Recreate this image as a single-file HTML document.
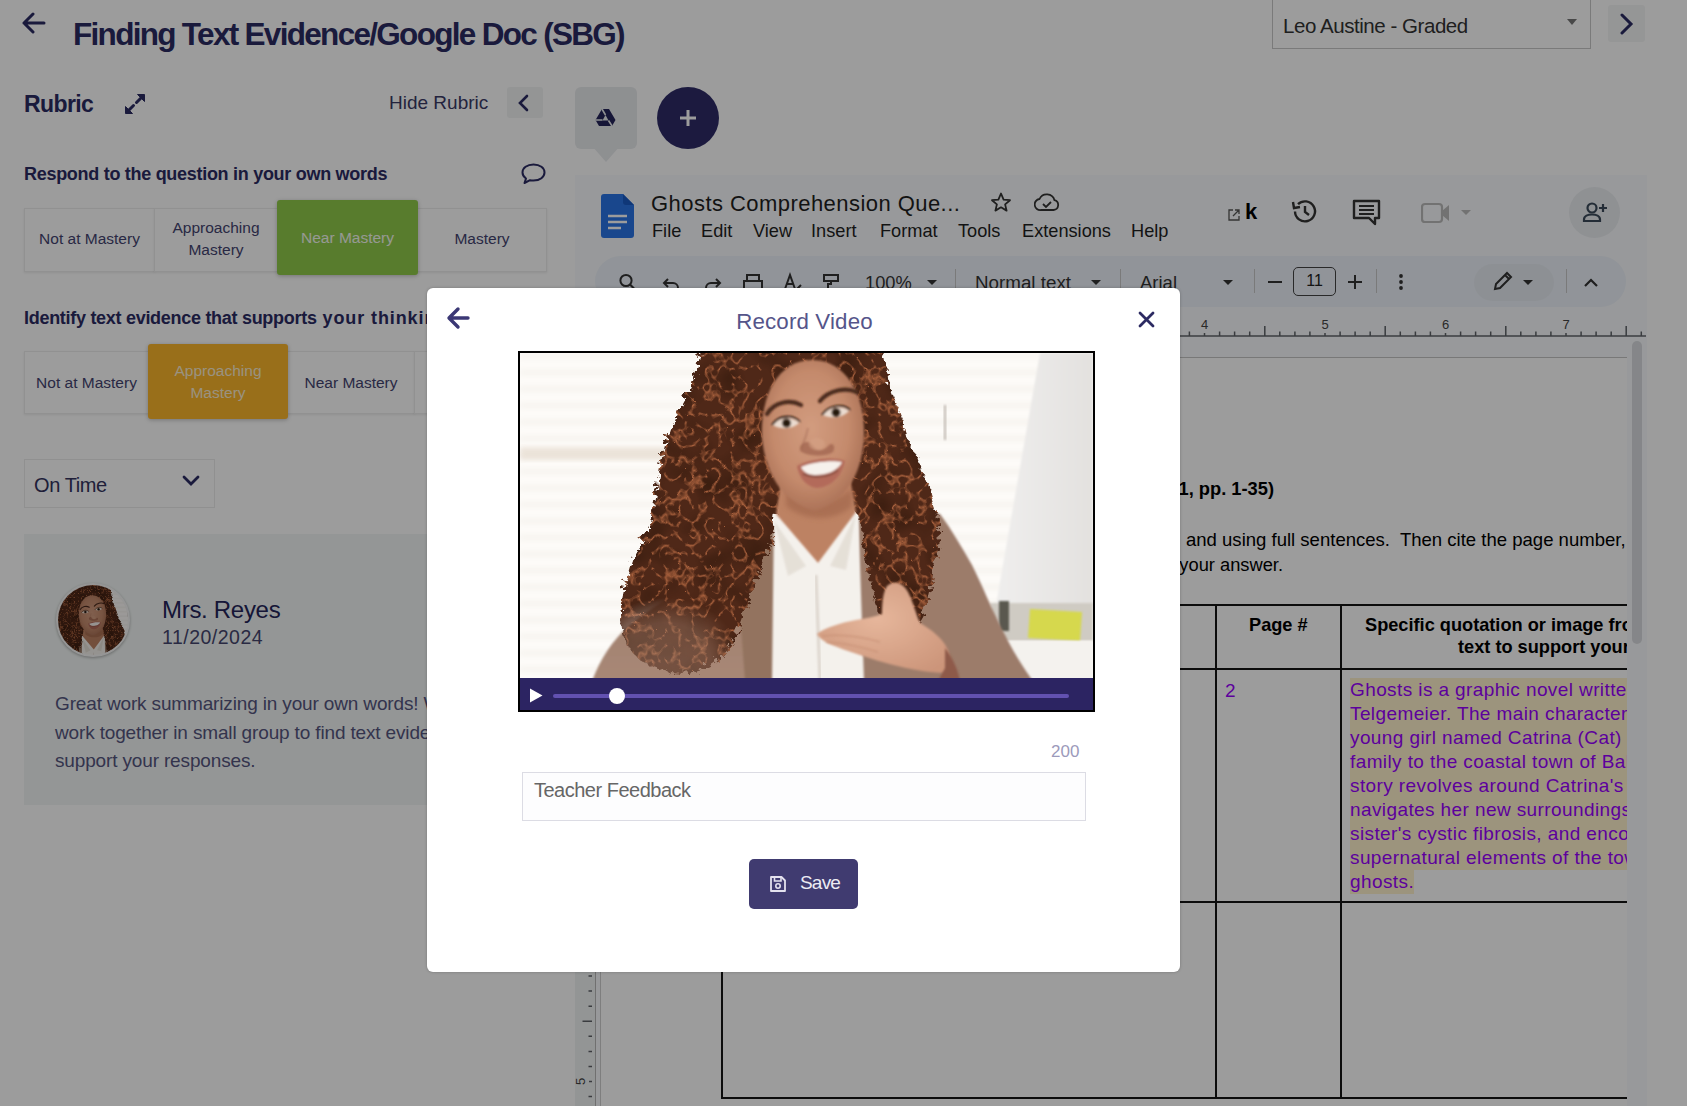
<!DOCTYPE html>
<html><head><meta charset="utf-8">
<style>
*{box-sizing:border-box;margin:0;padding:0}
html,body{width:1687px;height:1106px;overflow:hidden;background:#fff;font-family:"Liberation Sans",sans-serif;}
.abs{position:absolute}
.navy{color:#2b2b63}
#overlay{position:absolute;left:0;top:0;width:1687px;height:1106px;background:rgba(0,0,0,0.39);z-index:50}
#modal{position:absolute;left:427px;top:288px;width:753px;height:684px;background:#fff;border-radius:6px;z-index:60;box-shadow:0 0 3px rgba(0,0,0,.25)}
.cell{position:absolute;background:#fff;border:1px solid #ededed;box-shadow:0 1px 2px rgba(0,0,0,.08);color:#444470;font-size:15.5px;text-align:center;display:flex;align-items:center;justify-content:center;line-height:22px}
</style></head>
<body>
<!--DEFS--><svg width="0" height="0" style="position:absolute;left:0;top:0"><defs>
 <filter id="b1" x="-20%" y="-20%" width="140%" height="140%"><feGaussianBlur stdDeviation="1.2"/></filter>
 <filter id="b2" x="-20%" y="-20%" width="140%" height="140%"><feGaussianBlur stdDeviation="2.5"/></filter>
 <filter id="b4" x="-30%" y="-30%" width="160%" height="160%"><feGaussianBlur stdDeviation="4"/></filter>
 <filter id="hairf" x="-15%" y="-15%" width="130%" height="130%" color-interpolation-filters="sRGB">
  <feTurbulence type="turbulence" baseFrequency="0.1 0.12" numOctaves="3" seed="7" result="noise"/>
  <feDisplacementMap in="SourceGraphic" in2="noise" scale="10" result="disp"/>
  <feTurbulence type="turbulence" baseFrequency="0.075 0.065" numOctaves="2" seed="21" result="n2"/>
  <feColorMatrix in="n2" type="matrix" values="0 0 0 0 0.66  0 0 0 0 0.38  0 0 0 0 0.24  -5 0 0 0 0.95" result="lines"/>
  <feComposite in="lines" in2="disp" operator="in" result="tex"/>
  <feTurbulence type="fractalNoise" baseFrequency="0.03" numOctaves="2" seed="5" result="n3"/>
  <feColorMatrix in="n3" type="matrix" values="0 0 0 0 0.2  0 0 0 0 0.1  0 0 0 0 0.05  1.6 0 0 0 -0.7" result="shade"/>
  <feComposite in="shade" in2="disp" operator="in" result="shd"/>
  <feMerge><feMergeNode in="disp"/><feMergeNode in="shd"/><feMergeNode in="tex"/></feMerge>
  <feGaussianBlur stdDeviation="0.5"/>
 </filter>
 <linearGradient id="wb" x1="0" y1="0" x2="1" y2="0"><stop offset="0" stop-color="#efeeed"/><stop offset="1" stop-color="#e3e1df"/></linearGradient>
 <radialGradient id="skin" cx="0.48" cy="0.45" r="0.62"><stop offset="0" stop-color="#d29c7f"/><stop offset="0.6" stop-color="#c48a6c"/><stop offset="1" stop-color="#a36a50"/></radialGradient>
 <radialGradient id="handg" cx="0.45" cy="0.4" r="0.7"><stop offset="0" stop-color="#e6b69b"/><stop offset="1" stop-color="#cc957a"/></radialGradient>
 <linearGradient id="blz" x1="0" y1="0" x2="0" y2="1"><stop offset="0" stop-color="#9a7968"/><stop offset="1" stop-color="#a88876"/></linearGradient>
 <radialGradient id="fadeg" cx="0.5" cy="0.5" r="0.5"><stop offset="0" stop-color="#8a8a8a"/><stop offset="0.6" stop-color="#9a9a9a"/><stop offset="1" stop-color="#fff"/></radialGradient>
 <mask id="hm" maskUnits="userSpaceOnUse" x="500" y="290" width="600" height="400"><rect x="500" y="290" width="600" height="400" fill="#fff"/><ellipse cx="665" cy="660" rx="75" ry="62" fill="url(#fadeg)"/></mask>
 <g id="photoG">
<rect x="500" y="290" width="600" height="390" fill="#fdfbf8"/>
<g filter="url(#b2)"><rect x="520" y="353.0" width="520" height="6" fill="#e6e1dc" opacity="0.28"/><rect x="520" y="369.5" width="520" height="6" fill="#e6e1dc" opacity="0.28"/><rect x="520" y="386.0" width="520" height="6" fill="#e6e1dc" opacity="0.28"/><rect x="520" y="402.5" width="520" height="6" fill="#e6e1dc" opacity="0.28"/><rect x="520" y="419.0" width="520" height="6" fill="#e6e1dc" opacity="0.28"/><rect x="520" y="435.5" width="520" height="6" fill="#e6e1dc" opacity="0.28"/><rect x="520" y="452.0" width="520" height="6" fill="#e6e1dc" opacity="0.28"/><rect x="520" y="468.5" width="520" height="6" fill="#e6e1dc" opacity="0.28"/><rect x="520" y="485.0" width="520" height="6" fill="#e6e1dc" opacity="0.28"/><rect x="520" y="501.5" width="520" height="6" fill="#e6e1dc" opacity="0.28"/><rect x="520" y="518.0" width="520" height="6" fill="#e6e1dc" opacity="0.28"/><rect x="520" y="534.5" width="520" height="6" fill="#e6e1dc" opacity="0.28"/><rect x="520" y="551.0" width="520" height="6" fill="#e6e1dc" opacity="0.28"/><rect x="520" y="567.5" width="520" height="6" fill="#e6e1dc" opacity="0.28"/><rect x="520" y="584.0" width="520" height="6" fill="#e6e1dc" opacity="0.28"/><rect x="520" y="600.5" width="520" height="6" fill="#e6e1dc" opacity="0.28"/><rect x="520" y="617.0" width="520" height="6" fill="#e6e1dc" opacity="0.28"/><rect x="520" y="633.5" width="520" height="6" fill="#e6e1dc" opacity="0.28"/><rect x="520" y="650.0" width="520" height="6" fill="#e6e1dc" opacity="0.28"/><rect x="520" y="666.5" width="520" height="6" fill="#e6e1dc" opacity="0.28"/></g>
<rect x="520" y="447" width="330" height="13" fill="#e6dbcf" filter="url(#b2)" opacity="0.7"/>
<path d="M1040 353 H1093 V605 H996 Z" fill="url(#wb)" filter="url(#b1)"/>
<path d="M990 603 H1093 V641 H996 Z" fill="#cfcbc3" filter="url(#b1)"/>
<path d="M1030 609 L1082 612 L1080 641 L1028 638 Z" fill="#d6d84e" filter="url(#b1)"/>
<rect x="999" y="601" width="10" height="30" fill="#5a5850" filter="url(#b1)"/>
<rect x="990" y="641" width="103" height="40" fill="#f4f2ee" filter="url(#b1)"/>
<rect x="944" y="405" width="2" height="35" fill="#bdb6ae" filter="url(#b1)"/>
<!-- blazer -->
<path d="M592 681 C600 660 612 640 630 625 C660 600 700 580 740 555 L776 527 L776 681 Z" fill="url(#blz)" filter="url(#b1)"/>
<path d="M858 515 C890 510 920 508 940 514 C952 530 962 548 972 565 C982 585 992 610 1005 635 C1015 655 1025 670 1033 681 L858 681 Z" fill="#9c7b6a" filter="url(#b1)"/>
<path d="M736 560 L776 527 L778 681 L745 681 Z" fill="#93735f" filter="url(#b1)"/>
<!-- shirt -->
<path d="M774 512 L818 563 L858 508 L864 681 L772 681 Z" fill="#f4f1ec" filter="url(#b1)"/>
<path d="M774 521 L788 576 L806 566 Z M856 514 L846 570 L830 566 Z" fill="#e2dcd3" filter="url(#b1)" opacity="0.8"/>
<path d="M816 575 L820 681" stroke="#ddd6ce" stroke-width="3" filter="url(#b1)"/>
<!-- hair -->
<g mask="url(#hm)"><g filter="url(#hairf)">
<path d="M704 300 L872 300 C880 330 884 360 887 384 C893 400 897 410 900 418 C906 440 910 450 914 452 C920 470 925 480 928 487 C932 505 936 515 938 521 C938 540 937 550 935 555 C932 575 928 595 922 610 C916 624 906 632 896 630 C886 626 878 615 872 600 L859 521 C850 490 800 480 774 512 L770 540 C764 555 760 565 757 572 C750 590 745 605 738 625 C728 648 718 660 700 668 C680 674 655 670 638 658 C624 645 618 630 618 615 C619 600 624 575 631 555 C640 540 645 530 648 521 C651 505 653 495 655 487 C657 470 659 460 661 452 C665 435 668 425 672 418 C677 405 684 395 689 384 C695 370 700 355 704 300 Z" fill="#4f2818"/>
</g></g>
<!-- neck -->
<path d="M782 478 L850 478 L856 512 L818 563 L776 514 Z" fill="#bd8264" filter="url(#b1)"/>
<path d="M786 488 C805 505 835 505 852 488 L852 506 C835 522 805 522 786 506 Z" fill="#9e6449" filter="url(#b2)" opacity="0.6"/>
<!-- face -->
<path d="M812 360 C846 360 865 395 864 435 C863 468 850 500 815 511 C780 502 765 470 762 438 C760 396 778 360 812 360 Z" fill="url(#skin)" filter="url(#b1)"/>

<g filter="url(#b1)">
<path d="M767 414 C774 402 790 399 801 405" stroke="#4a2a1d" stroke-width="4.2" fill="none" stroke-linecap="round"/>
<path d="M820 401 C829 390 846 387 857 392" stroke="#4a2a1d" stroke-width="4.2" fill="none" stroke-linecap="round"/>
<path d="M773 425 C779 417 792 416 799 423 C793 429 780 430 773 425 Z" fill="#eadbd0"/>
<circle cx="786.5" cy="423" r="4.6" fill="#3b2a1e"/><circle cx="786.5" cy="423" r="2" fill="#140b06"/>
<path d="M772 425 C779 415 793 414 800 422" stroke="#2a1a12" stroke-width="1.8" fill="none"/>
<path d="M823 415 C829 407 842 405 849 411 C843 418 830 419 823 415 Z" fill="#eadbd0"/>
<circle cx="836" cy="412.5" r="4.6" fill="#3b2a1e"/><circle cx="836" cy="412.5" r="2" fill="#140b06"/>
<path d="M822 415 C829 405 843 403 850 410" stroke="#2a1a12" stroke-width="1.8" fill="none"/>
<path d="M808 428 C806 438 803 444 801 449" stroke="#a9705a" stroke-width="2" fill="none" opacity="0.6"/>
<path d="M800 447 C803 441 810 440 813 446 C817 452 824 451 828 446 C833 441 836 447 833 452 C826 457 808 457 800 451 Z" fill="#9a5e48" opacity="0.65"/>
<ellipse cx="817" cy="444" rx="8" ry="6" fill="#d6a286" opacity="0.6"/>
<path d="M797 466 C810 459 832 456 845 461 C841 480 827 488 816 488 C805 486 799 477 797 466 Z" fill="#b36a5a"/>
<path d="M801 467 C812 462 832 460 842 462 C838 471 826 475 815 475 C807 475 803 471 801 467 Z" fill="#f6f1ec"/>
<path d="M803 474 C812 478 830 478 838 470" stroke="#6a3a30" stroke-width="1.5" fill="none" opacity="0.7"/>
</g>
<!-- hand -->
<path d="M817 634 C824 628 840 623 856 620 C866 618 874 617 882 614 C882 604 883 592 887 586 C893 580 903 582 908 592 C913 602 916 614 920 623 C932 630 942 638 947 648 C951 657 951 666 949 673 C936 673 920 671 906 668 C888 664 868 658 848 651 C834 646 821 642 817 634 Z" fill="url(#handg)" filter="url(#b1)"/>
<path d="M822 636 C840 634 860 636 880 642 M826 642 C845 643 862 647 878 652" stroke="#c28a70" stroke-width="1.4" fill="none" opacity="0.6" filter="url(#b1)"/>
<path d="M945 648 C953 658 958 670 960 681 L938 681 L945 668 Z" fill="#8e5a4a" filter="url(#b1)"/>
 </g>
</defs></svg><!--/DEFS-->
<!-- header -->
<svg class="abs" style="left:22px;top:12px" width="24" height="22" viewBox="0 0 24 22"><path d="M11 2 L2 11 L11 20 M2 11 H22" stroke="#2b2b63" stroke-width="3" fill="none" stroke-linecap="round" stroke-linejoin="round"/></svg>
<div class="abs navy" id="title" style="left:73px;top:16px;font-size:31.5px;letter-spacing:-1.7px;font-weight:bold;white-space:nowrap">Finding Text Evidence/Google Doc (SBG)</div>

<div class="abs" style="left:1272px;top:-1px;width:319px;height:50px;border:1px solid #c8c8c8;background:#fff"></div>
<div class="abs" id="leo" style="left:1283px;top:14px;font-size:20.5px;letter-spacing:-0.45px;color:#333;white-space:nowrap">Leo Austine - Graded</div>
<div class="abs" style="left:1567px;top:19px;width:0;height:0;border-left:5px solid transparent;border-right:5px solid transparent;border-top:6px solid #777"></div>
<div class="abs" style="left:1608px;top:5px;width:37px;height:37px;background:#f4f6f6;border-radius:3px"></div>
<svg class="abs" style="left:1619px;top:13px" width="16" height="22" viewBox="0 0 16 22"><path d="M3 2 L12 11 L3 20" stroke="#2b2b63" stroke-width="3" fill="none" stroke-linecap="round"/></svg>


<!-- rubric panel -->
<div class="abs navy" id="rubric" style="left:24px;top:91px;font-size:23px;font-weight:bold;letter-spacing:-0.6px;white-space:nowrap">Rubric</div>
<svg class="abs" style="left:124px;top:93px" width="22" height="22" viewBox="0 0 22 22"><path d="M4 18 L9.5 12.5 M12.5 9.5 L18 4" stroke="#2b2b63" stroke-width="3" stroke-linecap="round"/><path d="M1.5 13.5 V20.5 H8.5 Z" fill="#2b2b63" stroke="#2b2b63" stroke-width="1" stroke-linejoin="round"/><path d="M13.5 1.5 H20.5 V8.5 Z" fill="#2b2b63" stroke="#2b2b63" stroke-width="1" stroke-linejoin="round"/></svg>
<div class="abs" id="hide" style="left:389px;top:92px;font-size:19px;color:#3a3a66;white-space:nowrap">Hide Rubric</div>
<div class="abs" style="left:507px;top:87px;width:36px;height:31px;background:#f2f4f4;border-radius:3px"></div>
<svg class="abs" style="left:517px;top:94px" width="14" height="18" viewBox="0 0 14 18"><path d="M10 2 L3 9 L10 16" stroke="#2b2b63" stroke-width="2.6" fill="none" stroke-linecap="round"/></svg>

<div class="abs navy" id="q1" style="left:24px;top:164px;font-size:18px;font-weight:bold;letter-spacing:-0.29px;white-space:nowrap">Respond to the question in your own words</div>
<svg class="abs" style="left:520px;top:162px" width="27" height="23" viewBox="0 0 27 23"><path d="M13.5 2.5 C7 2.5 2.5 6 2.5 10.5 C2.5 13 4 15 6 16.5 L4.5 21 L10 18.2 C11 18.4 12.3 18.5 13.5 18.5 C20 18.5 24.5 15 24.5 10.5 C24.5 6 20 2.5 13.5 2.5 Z" stroke="#2b2b63" stroke-width="2" fill="none" stroke-linejoin="round"/></svg>

<div class="cell" style="left:24px;top:208px;width:131px;height:64px;padding-bottom:3px">Not at Mastery</div>
<div class="cell" style="left:154px;top:208px;width:124px;height:64px;padding-bottom:2px">Approaching<br>Mastery</div>
<div class="cell" style="left:417px;top:208px;width:130px;height:64px;padding-bottom:3px">Mastery</div>
<div class="cell" style="left:277px;top:200px;width:141px;height:75px;background:#91cb4b;color:#f6faf0;border:none;border-radius:3px;box-shadow:0 1px 4px rgba(0,0,0,.25)">Near Mastery</div>

<div class="abs navy" id="q2" style="left:24px;top:308px;font-size:18px;font-weight:bold;letter-spacing:-0.29px;white-space:nowrap">Identify text evidence that supports<span style="letter-spacing:0.9px"> your thinking</span></div>
<div class="cell" style="left:24px;top:351px;width:125px;height:63px;">Not at Mastery</div>
<div class="cell" style="left:287px;top:351px;width:128px;height:63px;">Near Mastery</div>
<div class="cell" style="left:414px;top:351px;width:130px;height:63px;"></div>
<div class="cell" style="left:148px;top:344px;width:140px;height:75px;background:#fbb52c;color:#fcefd2;border:none;border-radius:3px;box-shadow:0 1px 4px rgba(0,0,0,.25)">Approaching<br>Mastery</div>

<div class="abs" style="left:24px;top:459px;width:191px;height:49px;border:1px solid #ececec;background:#fff"></div>
<div class="abs navy" id="ontime" style="left:34px;top:474px;font-size:20px;letter-spacing:-0.4px;color:#33335e;white-space:nowrap">On Time</div>
<svg class="abs" style="left:181px;top:474px" width="20" height="14" viewBox="0 0 20 14"><path d="M3 3 L10 10 L17 3" stroke="#2b2b63" stroke-width="2.8" fill="none" stroke-linecap="round"/></svg>

<div class="abs" style="left:24px;top:534px;width:540px;height:271px;background:#f2f6f5"></div>
<div class="abs" id="avatar" style="left:56px;top:583px;width:74px;height:74px;border-radius:50%;background:#eee;box-shadow:0 1px 3px rgba(0,0,0,.3);overflow:hidden;border:2px solid #f4f4f4"><svg width="70" height="70" viewBox="684 322 262 262" style="position:absolute;left:0;top:0"><use href="#photoG"/></svg></div>
<div class="abs navy" id="mrs" style="left:162px;top:596px;font-size:24px;letter-spacing:-0.3px;color:#25255a;white-space:nowrap">Mrs. Reyes</div>
<div class="abs" id="date" style="left:162px;top:626px;font-size:19.5px;letter-spacing:0.5px;color:#46466e;white-space:nowrap">11/20/2024</div>
<div class="abs" id="body" style="left:55px;top:690px;width:380px;font-size:19px;letter-spacing:-0.15px;line-height:28.7px;color:#55557f;white-space:nowrap">Great work summarizing in your own words! We<br>work together in small group to find text evidence<br>support your responses.</div>


<!-- drive & plus -->
<div class="abs" style="left:575px;top:87px;width:62px;height:62px;background:#e9ebee;border-radius:6px"></div>
<div class="abs" style="left:592px;top:146px;width:0;height:0;border-left:14px solid transparent;border-right:14px solid transparent;border-top:16px solid #e9ebee"></div>
<svg class="abs" style="left:595px;top:108px" width="21" height="19" viewBox="0 0 21 19"><path d="M7 1 H14 L20.5 12 L17 18 H4 L0.5 12 Z M10.5 7 L7.5 12.5 H13.5 Z" fill="#25245a" fill-rule="evenodd"/><path d="M7 1 L10.5 7 M0.5 12 H7.5 M17 18 L13.5 12.5" stroke="#e9ebee" stroke-width="1.6"/></svg>
<div class="abs" style="left:657px;top:87px;width:62px;height:62px;background:#2e2c68;border-radius:50%"></div>
<svg class="abs" style="left:678px;top:108px" width="20" height="20" viewBox="0 0 20 20"><path d="M10 2 V18 M2 10 H18" stroke="#fff" stroke-width="3"/></svg>

<!-- docs frame -->
<div class="abs" style="left:575px;top:175px;width:1072px;height:931px;background:#f9fbfd"></div>
<div class="abs" style="left:1647px;top:175px;width:40px;height:931px;background:#fff"></div>
<svg class="abs" style="left:601px;top:194px" width="33" height="44" viewBox="0 0 33 44"><path d="M3 0 H22 L33 11 V41 A3 3 0 0 1 30 44 H3 A3 3 0 0 1 0 41 V3 A3 3 0 0 1 3 0 Z" fill="#2a75e6"/><path d="M22 0 L33 11 H25 A3 3 0 0 1 22 8 Z" fill="#1a5bc4"/><path d="M7 22 H26 M7 28 H26 M7 34 H20" stroke="#fff" stroke-width="2.6"/></svg>
<div class="abs" id="gtitle" style="left:651px;top:191px;font-size:22px;letter-spacing:0.45px;color:#1f1f1f;white-space:nowrap">Ghosts Comprehension Que...</div>
<svg class="abs" style="left:990px;top:192px" width="22" height="20" viewBox="0 0 22 20"><path d="M11 1.5 L13.6 7.6 L20 8.2 L15.1 12.4 L16.6 18.6 L11 15.3 L5.4 18.6 L6.9 12.4 L2 8.2 L8.4 7.6 Z" fill="none" stroke="#333" stroke-width="1.8" stroke-linejoin="round"/></svg>
<svg class="abs" style="left:1034px;top:193px" width="26" height="19" viewBox="0 0 26 19"><path d="M7 17 H19.5 A5 5 0 0 0 20.5 7.2 A8 8 0 0 0 5.5 6 A5.5 5.5 0 0 0 7 17 Z" fill="none" stroke="#333" stroke-width="1.8"/><path d="M9 11 L12 14 L17 9" fill="none" stroke="#333" stroke-width="1.8"/></svg>
<div class="abs" id="menu" style="left:652px;top:221px;font-size:18.2px;color:#1f1f1f;white-space:nowrap;word-spacing:0">
<span class="abs" style="left:0">File</span><span class="abs" style="left:49px">Edit</span><span class="abs" style="left:101px">View</span><span class="abs" style="left:159px">Insert</span><span class="abs" style="left:228px">Format</span><span class="abs" style="left:306px">Tools</span><span class="abs" style="left:370px">Extensions</span><span class="abs" style="left:479px">Help</span></div>

<!-- right header icons -->
<svg class="abs" style="left:1227px;top:208px" width="14" height="14" viewBox="0 0 14 14"><path d="M6 2 H2 V12 H12 V8 M8 2 H12 V6 M12 2 L6 8" fill="none" stroke="#555" stroke-width="1.3"/></svg>
<div class="abs" style="left:1245px;top:199px;font-size:22px;font-weight:bold;color:#000">k</div>
<svg class="abs" style="left:1290px;top:198px" width="28" height="27" viewBox="0 0 28 27"><path d="M5 13.5 A10 10 0 1 0 8 6.2" fill="none" stroke="#333" stroke-width="2.4"/><path d="M3 4 L4 10 L10 9" fill="none" stroke="#333" stroke-width="2.4"/><path d="M15 8 V14 L19 17" fill="none" stroke="#333" stroke-width="2.4"/></svg>
<svg class="abs" style="left:1352px;top:199px" width="29" height="27" viewBox="0 0 29 27"><path d="M2 2 H27 V19 H23 V25 L17 19 H2 Z" fill="none" stroke="#333" stroke-width="2.4" stroke-linejoin="round"/><path d="M7 7 H22 M7 11 H22 M7 15 H22" stroke="#333" stroke-width="2"/></svg>
<svg class="abs" style="left:1421px;top:202px" width="30" height="22" viewBox="0 0 30 22"><path d="M4 2 H18 A3 3 0 0 1 21 5 V17 A3 3 0 0 1 18 20 H4 A3 3 0 0 1 1 17 V5 A3 3 0 0 1 4 2 Z" fill="none" stroke="#bbb" stroke-width="2.2"/><path d="M21 9 L28 3 V19 L21 13" fill="#bbb"/></svg>
<div class="abs" style="left:1461px;top:210px;width:0;height:0;border-left:5px solid transparent;border-right:5px solid transparent;border-top:5px solid #bbb"></div>
<div class="abs" style="left:1569px;top:187px;width:51px;height:51px;border-radius:50%;background:#eaedf1"></div>
<svg class="abs" style="left:1582px;top:201px" width="26" height="22" viewBox="0 0 26 22"><circle cx="10" cy="7" r="4.5" fill="none" stroke="#3b4b5a" stroke-width="2.2"/><path d="M2 20 V18.5 C2 15 6 13.5 10 13.5 C14 13.5 18 15 18 18.5 V20 Z" fill="none" stroke="#3b4b5a" stroke-width="2.2"/><path d="M21 3 V11 M17 7 H25" stroke="#3b4b5a" stroke-width="2.2"/></svg>

<!-- toolbar -->
<div class="abs" style="left:595px;top:256px;width:1031px;height:51px;border-radius:26px;background:#edf2fa"></div>
<div class="abs" style="left:1474px;top:264px;width:80px;height:37px;border-radius:19px;background:#e7ecf2"></div>
<svg class="abs" style="left:618px;top:272px" width="240" height="22" viewBox="0 0 240 22">
 <circle cx="8" cy="8.5" r="5.6" fill="none" stroke="#333" stroke-width="2"/><path d="M12 12.5 L16 16.5" stroke="#333" stroke-width="2.2"/>
 <path d="M50 7 L46 11 L50 15 M46 11 H55 A5 5 0 0 1 60 16 V19" fill="none" stroke="#333" stroke-width="2"/>
 <path d="M98 7 L102 11 L98 15 M102 11 H93 A5 5 0 0 0 88 16 V19" fill="none" stroke="#333" stroke-width="2"/>
 <path d="M129 9 V3 H141 V9 M126 9 H144 V18 H126 Z" fill="none" stroke="#333" stroke-width="2"/>
 <path d="M167 17 L172 3 L177 17 M169 12 H175 M178 18 L183 13" fill="none" stroke="#333" stroke-width="2"/>
 <path d="M206 3 H220 V9 H206 Z M213 9 V12 H210 V20" fill="none" stroke="#333" stroke-width="2"/>
</svg>
<div class="abs" style="left:865px;top:272px;font-size:18.3px;color:#333">100%</div>
<div class="abs" style="left:927px;top:280px;border-left:5px solid transparent;border-right:5px solid transparent;border-top:5px solid #333"></div>
<div class="abs" style="left:955px;top:269px;width:1px;height:24px;background:#c7c7c7"></div>
<div class="abs" style="left:975px;top:272px;font-size:18.8px;color:#333">Normal text</div>
<div class="abs" style="left:1091px;top:280px;border-left:5px solid transparent;border-right:5px solid transparent;border-top:5px solid #333"></div>
<div class="abs" style="left:1120px;top:269px;width:1px;height:24px;background:#c7c7c7"></div>
<div class="abs" style="left:1140px;top:272px;font-size:18.5px;color:#333">Arial</div>
<div class="abs" style="left:1223px;top:280px;border-left:5px solid transparent;border-right:5px solid transparent;border-top:5px solid #333"></div>
<div class="abs" style="left:1254px;top:269px;width:1px;height:24px;background:#c7c7c7"></div>
<div class="abs" style="left:1268px;top:281px;width:14px;height:2px;background:#333"></div>
<div class="abs" style="left:1293px;top:267px;width:43px;height:29px;border:1.6px solid #444;border-radius:5px;font-size:16px;color:#222;text-align:center;line-height:26px">11</div>
<svg class="abs" style="left:1347px;top:274px" width="16" height="16" viewBox="0 0 16 16"><path d="M8 1 V15 M1 8 H15" stroke="#333" stroke-width="2"/></svg>
<div class="abs" style="left:1376px;top:269px;width:1px;height:24px;background:#c7c7c7"></div>
<svg class="abs" style="left:1397px;top:273px" width="8" height="18" viewBox="0 0 8 18"><circle cx="4" cy="3" r="1.9" fill="#333"/><circle cx="4" cy="9" r="1.9" fill="#333"/><circle cx="4" cy="15" r="1.9" fill="#333"/></svg>
<svg class="abs" style="left:1492px;top:270px" width="22" height="22" viewBox="0 0 22 22"><path d="M3 19 L4 14 L15 3 L19 7 L8 18 Z M13 5 L17 9" fill="none" stroke="#333" stroke-width="2"/></svg>
<div class="abs" style="left:1523px;top:280px;border-left:5px solid transparent;border-right:5px solid transparent;border-top:5px solid #333"></div>
<div class="abs" style="left:1566px;top:269px;width:1px;height:24px;background:#c7c7c7"></div>
<svg class="abs" style="left:1583px;top:276px" width="16" height="12" viewBox="0 0 16 12"><path d="M2 10 L8 4 L14 10" fill="none" stroke="#333" stroke-width="2.2"/></svg>

<!-- ruler -->
<svg class="abs" style="left:1180px;top:312px" width="470" height="26" viewBox="1180 312 470 26" id="hruler"><path d="M1180 336 H1646" stroke="#5f6368" stroke-width="1.6"/><text x="1204.5" y="328.5" font-size="13" text-anchor="middle" fill="#444" font-family="Liberation Sans">4</text><text x="1325.0" y="328.5" font-size="13" text-anchor="middle" fill="#444" font-family="Liberation Sans">5</text><text x="1445.5" y="328.5" font-size="13" text-anchor="middle" fill="#444" font-family="Liberation Sans">6</text><text x="1566.0" y="328.5" font-size="13" text-anchor="middle" fill="#444" font-family="Liberation Sans">7</text><path d="M1189.4 331.5 V336 M1204.5 333 V336 M1219.6 331.5 V336 M1234.6 331.5 V336 M1249.7 331.5 V336 M1264.8 326 V336 M1279.8 331.5 V336 M1294.9 331.5 V336 M1309.9 331.5 V336 M1325.0 333 V336 M1340.1 331.5 V336 M1355.1 331.5 V336 M1370.2 331.5 V336 M1385.2 326 V336 M1400.3 331.5 V336 M1415.4 331.5 V336 M1430.4 331.5 V336 M1445.5 333 V336 M1460.6 331.5 V336 M1475.6 331.5 V336 M1490.7 331.5 V336 M1505.8 326 V336 M1520.8 331.5 V336 M1535.9 331.5 V336 M1550.9 331.5 V336 M1566.0 333 V336 M1581.1 331.5 V336 M1596.1 331.5 V336 M1611.2 331.5 V336 M1626.2 326 V336 M1641.3 331.5 V336" stroke="#5f6368" stroke-width="1.5"/></svg>
<div class="abs" style="left:600px;top:357px;width:1027px;height:1px;background:#c4c4c4"></div>
<div class="abs" style="left:1632px;top:341px;width:10px;height:303px;border-radius:5px;background:#dadce0"></div>
<!-- vertical ruler -->
<div class="abs" style="left:575px;top:360px;width:20px;height:746px;background:#f1f3f4"></div>
<div class="abs" style="left:595px;top:360px;width:1px;height:746px;background:#b8b8b8"></div>
<div class="abs" style="left:600px;top:360px;width:1px;height:746px;background:#cfcfcf"></div>
<svg class="abs" style="left:575px;top:960px" width="25" height="146" viewBox="575 960 25 146" id="vruler"><text x="0" y="0" font-size="13" text-anchor="middle" fill="#444" font-family="Liberation Sans" transform="translate(580.5 961.0) rotate(-90)" dy="0.35em">4</text><text x="0" y="0" font-size="13" text-anchor="middle" fill="#444" font-family="Liberation Sans" transform="translate(580.5 1081.5) rotate(-90)" dy="0.35em">5</text><path d="M589 961.0 H592 M588.5 976.1 H592 M588.5 991.1 H592 M588.5 1006.2 H592 M582.5 1021.2 H592 M588.5 1036.3 H592 M588.5 1051.4 H592 M588.5 1066.4 H592 M589 1081.5 H592 M588.5 1096.6 H592" stroke="#5f6368" stroke-width="1.5"/></svg>

<!-- page content -->
<div class="abs" style="left:601px;top:358px;width:1026px;height:748px;background:#fff"></div>
<div class="abs" id="pp" style="right:413px;top:478px;font-size:18.3px;font-weight:bold;color:#000;white-space:nowrap">(Chapters 1, pp. 1-35)</div>
<div class="abs" id="l1" style="left:1186px;top:529px;font-size:18.55px;color:#000;white-space:pre">and using full sentences.  Then cite the page number,</div>
<div class="abs" id="l2" style="right:404px;top:554px;font-size:18.3px;color:#000;white-space:pre">support your answer.</div>
<div class="abs" style="left:700px;top:604px;width:927px;height:2px;background:#151515"></div>
<div class="abs" style="left:700px;top:668px;width:927px;height:2px;background:#151515"></div>
<div class="abs" style="left:700px;top:901px;width:927px;height:2px;background:#151515"></div>
<div class="abs" style="left:721px;top:1097px;width:906px;height:2px;background:#151515"></div>
<div class="abs" style="left:721px;top:604px;width:2px;height:494px;background:#151515"></div>
<div class="abs" style="left:1215px;top:604px;width:2px;height:494px;background:#151515"></div>
<div class="abs" style="left:1340px;top:604px;width:2px;height:494px;background:#151515"></div>
<div class="abs" id="pg" style="left:1249px;top:615px;font-size:18.2px;font-weight:bold;color:#000;white-space:nowrap">Page #</div>
<div class="abs" style="left:1342px;top:604px;width:285px;height:494px;overflow:hidden">
 <div class="abs" id="spec" style="left:23px;top:10px;font-size:18.2px;font-weight:bold;color:#000;white-space:nowrap;line-height:22px">Specific quotation or image from the<br><span style="padding-left:93px">text to support your answer</span></div>
 <div class="abs" id="purple" style="left:8px;top:74px;width:420px;font-size:19px;letter-spacing:0.4px;line-height:24px;color:#9900ff;white-space:nowrap"><span style="background:#fff2cc;padding:1px 0 2px;-webkit-box-decoration-break:clone">Ghosts is a graphic novel written by Raina<br>Telgemeier. The main character is a<br>young girl named Catrina (Cat) who moves<br>family to the coastal town of Bahía de la Luna.<br>story revolves around Catrina's experiences<br>navigates her new surroundings, her<br>sister's cystic fibrosis, and encounters with<br>supernatural elements of the town, including<br>ghosts. </span></div>
</div>
<div class="abs" id="two" style="left:1225px;top:680px;font-size:19px;color:#9900ff">2</div>

<div id="overlay"></div>
<div id="modal">
<svg class="abs" style="left:19px;top:18px" width="25" height="24" viewBox="0 0 25 24"><path d="M12 3 L3 12 L12 21 M3.5 12 H22" stroke="#3b3875" stroke-width="3.4" fill="none" stroke-linecap="round" stroke-linejoin="round"/></svg>
<div class="abs" id="rv" style="left:1px;width:753px;top:21px;text-align:center;font-size:22.3px;letter-spacing:0.15px;color:#55558a;white-space:nowrap">Record Video</div>
<svg class="abs" style="left:711px;top:23px" width="17" height="17" viewBox="0 0 17 17"><path d="M2 2 L15 15 M15 2 L2 15" stroke="#2c2a62" stroke-width="2.8" stroke-linecap="round"/></svg>
<div class="abs" style="left:91px;top:63px;width:577px;height:361px;background:#000"></div>
<div class="abs" id="video" style="left:93px;top:65px;width:573px;height:326px;overflow:hidden;background:#fdfbf8"><!--PHOTO--><svg width="573" height="326" viewBox="520 353 573 326" style="position:absolute;left:0;top:0"><use href="#photoG"/></svg><!--/PHOTO--></div>
<div class="abs" style="left:93px;top:390px;width:573px;height:32px;background:#2c2462"></div>
<svg class="abs" style="left:102px;top:400px" width="14" height="15" viewBox="0 0 14 15"><path d="M1 0.5 L13.5 7.5 L1 14.5 Z" fill="#fff"/></svg>
<div class="abs" style="left:126px;top:406px;width:516px;height:3.5px;background:#6251b0;border-radius:2px"></div>
<div class="abs" style="left:182px;top:400px;width:16px;height:16px;border-radius:50%;background:#fff"></div>
<div class="abs" id="cnt" style="left:624px;top:454px;font-size:17px;color:#9c9abb;white-space:nowrap">200</div>
<div class="abs" style="left:95px;top:484px;width:564px;height:49px;border:1.5px solid #dcdce4;background:#fdfdfe"></div>
<div class="abs" id="tf" style="left:107px;top:491px;font-size:20px;letter-spacing:-0.5px;color:#666;white-space:nowrap">Teacher Feedback</div>
<div class="abs" style="left:322px;top:571px;width:109px;height:50px;background:#403b70;border-radius:5px"></div>
<svg class="abs" style="left:342px;top:587px" width="18" height="18" viewBox="0 0 18 18"><path d="M2 2 H12.5 L16 5.5 V16 H2 Z" fill="none" stroke="#e4e2ee" stroke-width="1.8" stroke-linejoin="round"/><circle cx="9" cy="11" r="2.2" fill="none" stroke="#e4e2ee" stroke-width="1.6"/><path d="M5.5 2 V6 H12 V2" fill="none" stroke="#e4e2ee" stroke-width="1.6"/></svg>
<div class="abs" id="save" style="left:373px;top:584px;font-size:19px;letter-spacing:-0.8px;color:#ecebf3;white-space:nowrap">Save</div>
</div>
</body></html>
